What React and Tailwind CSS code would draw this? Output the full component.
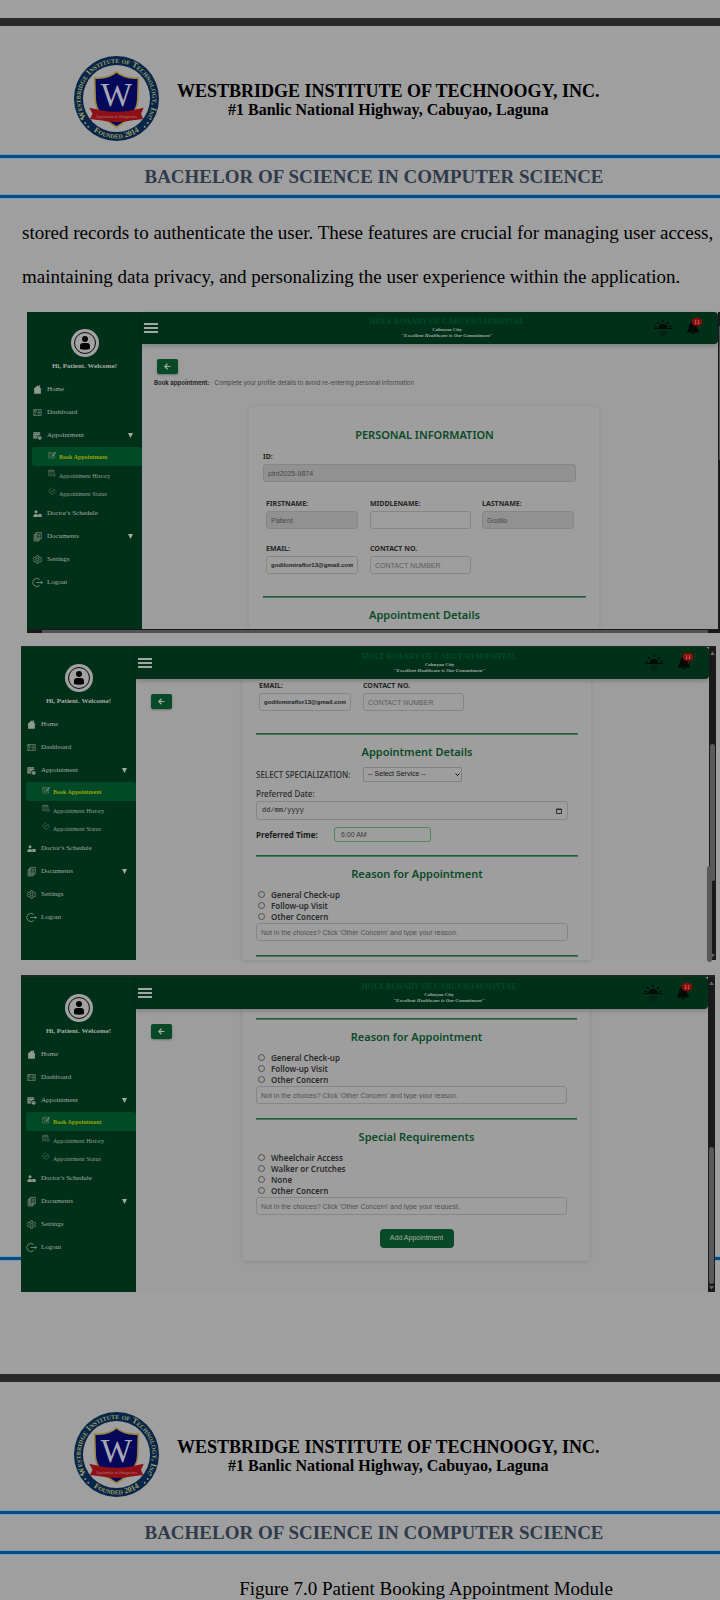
import React, { useId } from "react";

const SERIF = "font-['Liberation_Serif',serif]";
const ARIAL = "font-['Liberation_Sans',sans-serif]";
const HUMANIST = "font-['Noto_Sans','Open_Sans',sans-serif]";

/* ---------- document parts ---------- */

function Seal() {
  const id = useId();
  return (
    <svg viewBox="0 0 256 256" className="size-[85px] shrink-0" role="img" aria-label="Westbridge Institute of Technology seal">
      <defs>
        <path id={id + "t"} d="M34 182 A108 108 0 1 1 222 182" />
        <path id={id + "b"} d="M46 216 A120 120 0 0 0 210 216" />
      </defs>
      <circle cx="128" cy="128" r="128" fill="#07264a" />
      <circle cx="128" cy="128" r="101" fill="#a0a0a0" />
      <g fill="#a09e62" fontFamily="Liberation Serif, serif" fontWeight="bold" className="[font-variant:small-caps]">
        <text fontSize="25">
          <textPath href={"#" + id + "t"} startOffset="50%" textAnchor="middle">
            Westbridge Institute of Technology, Inc
          </textPath>
        </text>
        <text fontSize="24">
          <textPath href={"#" + id + "b"} startOffset="50%" textAnchor="middle">
            Founded 2014
          </textPath>
        </text>
      </g>
      <g fill="#8f9276">
        <circle cx="26" cy="190" r="3" />
        <circle cx="34" cy="202" r="3" />
        <circle cx="43" cy="213" r="3" />
        <circle cx="230" cy="190" r="3" />
        <circle cx="222" cy="202" r="3" />
        <circle cx="213" cy="213" r="3" />
      </g>
      <path
        d="M128 48 C112 62 88 68 62 66 L64 132 C66 172 96 196 128 214 C160 196 190 172 192 132 L194 66 C168 68 144 62 128 48Z"
        fill="#04075a"
        stroke="#9c8740"
        strokeWidth="5"
      />
      <text x="128" y="151" textAnchor="middle" fontSize="100" fill="#a9a9b4" fontFamily="Liberation Serif, serif">
        W
      </text>
      <path d="M46 156 L84 164 Q128 172 172 164 L210 156 L202 174 L208 190 L172 194 Q128 204 84 194 L48 190 L56 174Z" fill="#8c1016" />
      <text x="128" y="187" textAnchor="middle" fontSize="14" fontStyle="italic" fill="#b5757a" fontFamily="Liberation Serif, serif">
        Sapientia et Integritas
      </text>
    </svg>
  );
}

function Rule({ className = "" }) {
  return <div className={"h-[5px] border-y border-[#6f9dbb] bg-[#054d80] " + className} />;
}

function Letterhead() {
  return (
    <header className={SERIF}>
      <div className="flex h-[128px] items-center pt-[17px] pl-[74px]">
        <Seal />
        <div className="mt-[2px] ml-[18px] text-center font-bold text-black">
          <p className="text-[18px] leading-5">WESTBRIDGE INSTITUTE OF TECHNOOGY, INC.</p>
          <p className="text-[16px] leading-[18px]">#1 Banlic National Highway, Cabuyao, Laguna</p>
        </div>
      </div>
      <Rule />
      <h1 className="pl-[28px] text-center text-[19px] leading-[35px] font-bold text-[#2f3a4b]">
        BACHELOR OF SCIENCE IN COMPUTER SCIENCE
      </h1>
      <Rule />
    </header>
  );
}

/* ---------- icons ---------- */

const line = { fill: "none", stroke: "currentColor", strokeWidth: 1.5 };

const icons = {
  home: <path d="M12 1 L23 11 H21 V23 H3 V11 H1Z M15 3 V1 H19 V7Z" fill="currentColor" />,
  dashboard: (
    <g {...line}>
      <path d="M2 4 H22 V20 H2Z M2 20 L9 12 M12 8 H20 M12 12 H20 M12 16 H20" />
      <circle cx="6" cy="8" r="3" />
    </g>
  ),
  appointment: (
    <g>
      <path d="M1 3 H19 V11 A6 6 0 0 0 12 20 H1Z" fill="currentColor" />
      <path d="M1 7 H19 M3 12 H11 M3 16 H10" stroke="#003019" strokeWidth="1.2" />
      <circle cx="18" cy="18" r="5" fill="currentColor" />
      <path d="M18 15 V18 H20" fill="none" stroke="#003019" strokeWidth="1.2" />
    </g>
  ),
  book: (
    <g {...line}>
      <path d="M2 4 H17 M2 4 V21 H20 V11 M2 8 H14 M5 12 H10 M5 16 H9" />
      <path d="M11 16 L21 3 L23 5 L14 17Z" fill="currentColor" />
    </g>
  ),
  history: (
    <g {...line}>
      <path d="M2 4 H18 V12 M2 4 V20 H12 M2 8 H18 M6 2 V6 M14 2 V6 M5 12 H14 M5 16 H11" />
      <circle cx="18" cy="18" r="4" />
    </g>
  ),
  status: (
    <g {...line}>
      <path d="M20 8 A9 9 0 1 1 12 3" strokeDasharray="5 1" />
      <path d="M8 11 L11 15 L18 6" />
    </g>
  ),
  doctor: (
    <g fill="currentColor">
      <circle cx="8" cy="7" r="4" />
      <path d="M1 21 V17 Q1 13 8 13 Q12 13 13 15 V21Z M14 13 H23 V21 H14Z" />
    </g>
  ),
  documents: (
    <g {...line} strokeWidth={1.8}>
      <path d="M9 1 H22 V18 H9Z M9 4 H6 V21 H18 V18 M6 7 H3 V24 H15 V21 M12 6 H19 M12 10 H19 M12 14 H19" />
    </g>
  ),
  settings: (
    <g {...line} strokeWidth={1.8}>
      <path d="M10 2 H14 L15 5 L18 6.500 L21 6 L23 9 L21 12 L23 15 L21 18 L18 17.500 L15 19 L14 22 H10 L9 19 L6 17.500 L3 18 L1 15 L3 12 L1 9 L3 6 L6 6.500 L9 5Z" />
      <circle cx="12" cy="12" r="4" />
    </g>
  ),
  logout: (
    <path d="M18 4 A11 11 0 1 0 18 20 M9 12 H25 M21 8 L25 12 L21 16" fill="none" stroke="currentColor" strokeWidth="2" />
  ),
};

function Icon({ name, className = "" }) {
  return (
    <svg viewBox="0 0 24 24" className={"shrink-0 overflow-visible " + className} aria-hidden="true">
      {icons[name]}
    </svg>
  );
}

function Triangle({ className = "" }) {
  return (
    <svg viewBox="0 0 10 10" className={"size-[5px] " + className} aria-hidden="true">
      <path d="M0 8 L5 1 L10 8Z" fill="currentColor" />
    </svg>
  );
}

/* ---------- hospital application ---------- */

function NavItem({ icon, label, caret }) {
  return (
    <a href="#" className="flex h-[23px] items-center pr-[9px] pl-[6px] text-[7px] text-[#a3aca4]">
      <Icon name={icon} className="size-[9px] text-[#8f9a91]" />
      <span className="ml-[5px] flex-1">{label}</span>
      {caret && (
        <svg viewBox="0 0 10 10" className="size-[5px]" aria-hidden="true">
          <path d="M0 0 H10 L5 10Z" fill="currentColor" />
        </svg>
      )}
    </a>
  );
}

function SubItem({ icon, label, active }) {
  const tone = active
    ? "h-[19px] rounded-l-[3px] rounded-tr-[3px] bg-[#004a27] font-bold text-[#98a208]"
    : "h-[18px] text-[#939e95]";
  return (
    <a href="#" className={"ml-[5px] flex items-center pl-[16px] text-[6px] leading-3 " + tone}>
      <Icon name={icon} className="mb-[4px] size-[8px] text-[#76867a]" />
      <span className="ml-[3px] pt-px">{label}</span>
    </a>
  );
}

function Sidebar() {
  return (
    <nav className={"w-[115px] shrink-0 bg-[#003019] pt-[17px] " + SERIF}>
      <div className="flex flex-col items-center">
        <svg viewBox="0 0 56 56" className="size-[28px]" aria-hidden="true">
          <circle cx="28" cy="28" r="28" fill="#a2a2a2" />
          <circle cx="28" cy="28" r="21" fill="none" stroke="#0a0a0a" strokeWidth="2" />
          <circle cx="28" cy="20" r="6" fill="#050505" />
          <path d="M18 40 V34 Q18 28 24 28 H32 Q38 28 38 34 V40 Q28 43 18 40Z" fill="#050505" />
        </svg>
        <p className="mt-[4px] text-[7px] leading-[10px] font-bold text-[#a5ada6]">Hi, Patient. Welcome!</p>
      </div>
      <div className="mt-[7px]">
        <NavItem icon="home" label="Home" />
        <NavItem icon="dashboard" label="Dashboard" />
        <NavItem icon="appointment" label="Appointment" caret />
        <SubItem icon="book" label="Book Appointment" active />
        <SubItem icon="history" label="Appointment History" />
        <SubItem icon="status" label="Appointment Status" />
        <NavItem icon="doctor" label="Doctor's Schedule" />
        <NavItem icon="documents" label="Documents" caret />
        <NavItem icon="settings" label="Settings" />
        <NavItem icon="logout" label="Logout" />
      </div>
    </nav>
  );
}

function Topbar() {
  return (
    <header
      className={
        "relative z-10 flex h-[32px] items-center rounded-r-[4px] bg-[#003019] shadow-[0_2px_4px_rgba(0,0,0,0.2)] " + SERIF
      }
    >
      <div className="w-[101px] pl-[2px]">
        <button type="button" aria-label="Menu" className="flex w-[14px] flex-col gap-[2px]">
          <span className="h-[2px] w-full bg-[#a0a8a2]" />
          <span className="h-[2px] w-full bg-[#a0a8a2]" />
          <span className="h-[2px] w-full bg-[#a0a8a2]" />
        </button>
      </div>
      <div className="flex-1 text-center font-bold">
        <p className="text-[8px] leading-[10px] text-[#004a28]">HOLY ROSARY OF CABUYAO HOSPITAL</p>
        <p className="text-[5px] leading-[6px] text-[#a5ada6]">Cabuyao City</p>
        <p className="text-[5px] leading-[6px] text-[#a5ada6] italic">"Excellent Healthcare is Our Commitment"</p>
      </div>
      <div className="flex w-[67px] items-center gap-[15px] pl-[3px] text-[#020a06]">
        <svg viewBox="0 0 36 36" className="size-[18px]" aria-hidden="true">
          <path d="M9 19 A9 9 0 0 1 27 19Z" fill="currentColor" />
          <path
            d="M0 19 H36 M18 1 V6 M6 6 L10 10 M30 6 L26 10 M1 14 L6 16 M35 14 L30 16"
            stroke="currentColor"
            strokeWidth="2.200"
          />
          <circle cx="18" cy="27" r="4" fill="none" stroke="currentColor" strokeWidth="1" />
          <path d="M18 33 V36 M10 27 H12 M24 27 H26 M12 33 L14 31 M24 33 L22 31" stroke="currentColor" strokeWidth="1.500" />
        </svg>
        <span className="relative">
          <svg viewBox="0 0 24 28" className="h-[14px] w-[12px]" aria-hidden="true">
            <path d="M12 2 C5 3 4 9 4 14 L0 21 V23 H24 V21 L20 14 C20 9 19 3 12 2Z M9 24 H15 Q14 27 12 27 Q10 27 9 24Z" fill="currentColor" />
          </svg>
          <span className="absolute -top-[3px] left-[5px] flex h-[8px] w-[10px] items-center justify-center rounded-full bg-[#930a0a] text-[6px] leading-none text-[#b8a5a5]">
            11
          </span>
        </span>
      </div>
    </header>
  );
}

function BackButton() {
  return (
    <button
      type="button"
      aria-label="Back"
      className="flex h-[15px] w-[21px] items-center justify-center rounded-[2px] bg-[#084a27] text-[#a5ada6] shadow-[0_1px_2px_rgba(0,0,0,0.3)]"
    >
      <svg viewBox="0 0 14 14" className="size-[7px]" aria-hidden="true">
        <path d="M13 7 H2 M7 1.500 L1.500 7 L7 12.500" fill="none" stroke="currentColor" strokeWidth="2.400" />
      </svg>
    </button>
  );
}

function Divider({ className = "" }) {
  return <hr className={"h-[2px] border-0 border-t border-t-[#1f5c39] bg-[#47755a] " + className} />;
}

function Heading({ children, className = "" }) {
  return <h2 className={"text-center text-[11px] leading-4 font-semibold text-[#0a4a27] " + className}>{children}</h2>;
}

const box = "block h-[18px] w-full rounded-[3px] border border-[#868686] px-[4px] outline-none " + ARIAL;

function Field({ label, value, placeholder, muted, strong, className = "" }) {
  const id = useId();
  const tone = muted ? " bg-[#919191] text-[#484848] " : " bg-transparent text-[#222222] ";
  return (
    <div className={className}>
      <label htmlFor={id} className="mb-[2px] block text-[7px] leading-[10px] font-bold text-[#252525]">
        {label}
      </label>
      <input
        id={id}
        type="text"
        defaultValue={value}
        placeholder={placeholder}
        readOnly={muted}
        className={box + tone + "placeholder:text-[#5c5c5c] " + (strong ? "text-[6px] font-bold" : "text-[7px]")}
      />
    </div>
  );
}

function ContactRow() {
  return (
    <div className="flex pr-[12px] pl-[3px]">
      <Field label="EMAIL:" value="godilomiraflor13@gmail.com" strong className="w-[92px]" />
      <Field label="CONTACT NO." placeholder="CONTACT NUMBER" className="ml-[12px] w-[101px]" />
    </div>
  );
}

function Choices({ options, hint }) {
  const name = useId();
  return (
    <fieldset className="mr-[10px]">
      {options.map((text) => (
        <label key={text} className="flex h-[11px] items-center pl-[2px] text-[8px] leading-[11px] font-semibold text-[#2a2a2a]">
          <input type="radio" name={name} className="m-0 mr-[6px] size-[7px] appearance-none rounded-full border border-[#505050]" />
          {text}
        </label>
      ))}
      <input
        type="text"
        aria-label={hint}
        placeholder={hint}
        className={box + " mt-px bg-transparent text-[7px] placeholder:text-[#505050]"}
      />
    </fieldset>
  );
}

function ReasonSection() {
  return (
    <>
      <Divider />
      <Heading className="mt-[9px] mb-[7px]">Reason for Appointment</Heading>
      <Choices
        options={["General Check-up", "Follow-up Visit", "Other Concern"]}
        hint="Not in the choices? Click 'Other Concern' and type your reason."
      />
      <Divider className="mt-[14px]" />
    </>
  );
}

function AppointmentFields() {
  const id = useId();
  return (
    <>
      <div className="flex items-center text-[8px] text-[#2a2a2a]">
        <label htmlFor={id + "s"} className="w-[107px] font-medium">
          SELECT SPECIALIZATION:
        </label>
        <span className="relative">
          <select
            id={id + "s"}
            className={
              "block h-[15px] w-[99px] appearance-none rounded-[2px] border border-[#808080] px-[4px] text-[7px] text-[#151515] " + ARIAL
            }
          >
            <option>-- Select Service --</option>
          </select>
          <svg viewBox="0 0 10 6" className="pointer-events-none absolute top-[6px] right-[2px] h-[3px] w-[5px]" aria-hidden="true">
            <path d="M1 1 L5 5 L9 1" fill="none" stroke="#111" strokeWidth="2" />
          </svg>
        </span>
      </div>
      <label htmlFor={id + "d"} className="mt-[6px] block text-[8px] leading-3 font-medium text-[#2a2a2a]">
        Preferred Date:
      </label>
      <div className="mt-px mr-[10px] flex h-[19px] items-center rounded-[3px] border border-[#868686] px-[5px]">
        <input
          id={id + "d"}
          type="text"
          placeholder="dd/mm/yyyy"
          className="min-w-0 flex-1 bg-transparent font-['Liberation_Mono',monospace] text-[7px] outline-none placeholder:text-[#1c1c1c]"
        />
        <svg viewBox="0 0 12 12" className="size-[6px]" aria-hidden="true">
          <path d="M1 2 H11 V11 H1Z M1 3 H11" fill="none" stroke="#222" strokeWidth="1.800" />
        </svg>
      </div>
      <div className="mt-[7px] flex items-center">
        <label htmlFor={id + "t"} className="w-[78px] text-[8px] font-bold text-[#1a1a1a]">
          Preferred Time:
        </label>
        <input
          id={id + "t"}
          type="text"
          defaultValue="6:00 AM"
          className={"h-[15px] w-[97px] rounded-[3px] border border-[#4f8560] px-[6px] text-[7px] text-[#3a3a3a] outline-none " + ARIAL}
        />
      </div>
    </>
  );
}

const card = "min-w-0 flex-1 bg-[#9e9e9e] pl-[14px] pr-[13px] shadow-[0_1px_4px_rgba(0,0,0,0.12)] " + HUMANIST;

function AppWindow({ children }) {
  return (
    <>
      <Sidebar />
      <div className="flex min-w-0 flex-1 flex-col bg-[#9d9d9d]">
        <Topbar />
        {children}
      </div>
    </>
  );
}

function Scrollbar({ thumb }) {
  return (
    <div className="flex w-[7px] shrink-0 flex-col items-center bg-[#1a1a1a] pt-[4px] pb-[2px] text-[#666]">
      <Triangle />
      <div className={"w-[5px] rounded-full bg-[#5a5a5a] " + thumb} />
      <Triangle className="mt-auto rotate-180" />
    </div>
  );
}

function PersonalShot() {
  return (
    <section className="ml-[27px] flex">
      <div className="min-w-0 flex-1">
        <div className="flex">
          <AppWindow>
            <div className="pt-[15px] pl-[15px]">
              <BackButton />
            </div>
            <p className="mt-[4px] pl-[12px] font-[Inter,sans-serif] text-[6px] leading-[10px] text-[#444444]">
              <b className="mr-[5px] text-[#2a2a2a]">Book appointment:</b>
              Complete your profile details to avoid re-entering personal information
            </p>
            <div className="mt-[18px] flex pr-[119px] pl-[107px]">
              <form className={card + " rounded-t-[5px] pt-[21px] pb-[6px]"}>
                <Heading>PERSONAL INFORMATION</Heading>
                <Field label="ID:" value="ptnt2025-9874" muted className="mt-[9px] mr-[10px]" />
                <div className="mt-[17px] mb-[15px] flex pr-[12px] pl-[3px]">
                  <Field label="FIRSTNAME:" value="Patient" muted className="w-[92px]" />
                  <Field label="MIDDLENAME:" className="ml-[12px] w-[101px]" />
                  <Field label="LASTNAME:" value="Godilo" muted className="ml-[11px] w-[92px]" />
                </div>
                <ContactRow />
                <Divider className="mt-[22px]" />
                <Heading className="mt-[9px]">Appointment Details</Heading>
              </form>
            </div>
          </AppWindow>
        </div>
        <div className="flex h-[4px] items-end bg-[#191919] pr-[10px] pl-[15px]">
          <div className="h-[3px] flex-1 bg-[#525252]" />
        </div>
      </div>
      <div className="w-[2px] shrink-0 bg-[#1b1b1b] pt-[14px]">
        <div className="ml-px h-[134px] bg-[#555]" />
      </div>
    </section>
  );
}

function DetailsShot() {
  return (
    <section className="relative mt-[13px] mr-[4px] ml-[21px] flex border-t border-[#1c2a20]">
      <AppWindow>
        <div className="flex pr-[118px]">
          <div className="w-[106px] shrink-0 pt-[15px] pl-[15px]">
            <BackButton />
          </div>
          <form className={card + " pt-[2px] pb-[3px]"}>
            <ContactRow />
            <Divider className="mt-[22px]" />
            <Heading className="mt-[9px] mb-[7px]">Appointment Details</Heading>
            <AppointmentFields />
            <div className="mt-[13px]">
              <ReasonSection />
            </div>
          </form>
        </div>
      </AppWindow>
      <Scrollbar thumb="mt-[88px] h-[137px]" />
      <div className="absolute right-[4px] -bottom-[2px] h-[96px] w-[5px] rounded-full bg-[#585858]" />
    </section>
  );
}

function RequirementsShot() {
  return (
    <section className="relative mt-[15px] mr-[5px] ml-[21px] flex border-t-2 border-[#1c2a20]">
      <AppWindow>
        <div className="flex pr-[118px] pb-[31px]">
          <div className="w-[106px] shrink-0 pt-[15px] pl-[15px]">
            <BackButton />
          </div>
          <form className={card + " rounded-b-[5px] pt-[9px] pb-[13px]"}>
            <ReasonSection />
            <Heading className="mt-[9px] mb-[7px]">Special Requirements</Heading>
            <Choices
              options={["Wheelchair Access", "Walker or Crutches", "None", "Other Concern"]}
              hint="Not in the choices? Click 'Other Concern' and type your request."
            />
            <button
              type="button"
              className={"mx-auto mt-[14px] block h-[19px] w-[74px] rounded-[4px] bg-[#084a27] text-[7px] text-[#a5ada6] " + ARIAL}
            >
              Add Appointment
            </button>
          </form>
        </div>
      </AppWindow>
      <Scrollbar thumb="mt-[161px] h-[137px]" />
    </section>
  );
}

export default function App() {
  return (
    <main className="min-h-screen overflow-x-hidden bg-[#9f9f9f]">
      <div className="h-[18px]" />
      <div className="h-[8px] bg-[#282828]" />
      <article className="relative pb-[82px]">
        <Letterhead />
        <p className={"mt-[12px] mb-[13px] pl-[22px] text-[19px] leading-[44px] text-black " + SERIF}>
          stored records to authenticate the user. These features are crucial for managing user access, maintaining data privacy,
          and personalizing the user experience within the application.
        </p>
        <Rule className="absolute inset-x-0 bottom-[113px]" />
        <PersonalShot />
        <DetailsShot />
        <RequirementsShot />
      </article>
      <div className="h-[8px] bg-[#282828]" />
      <article>
        <Letterhead />
        <p className={"pt-[22px] pl-[132px] text-center text-[19px] leading-[23px] text-black " + SERIF}>
          Figure 7.0 Patient Booking Appointment Module
        </p>
      </article>
    </main>
  );
}
